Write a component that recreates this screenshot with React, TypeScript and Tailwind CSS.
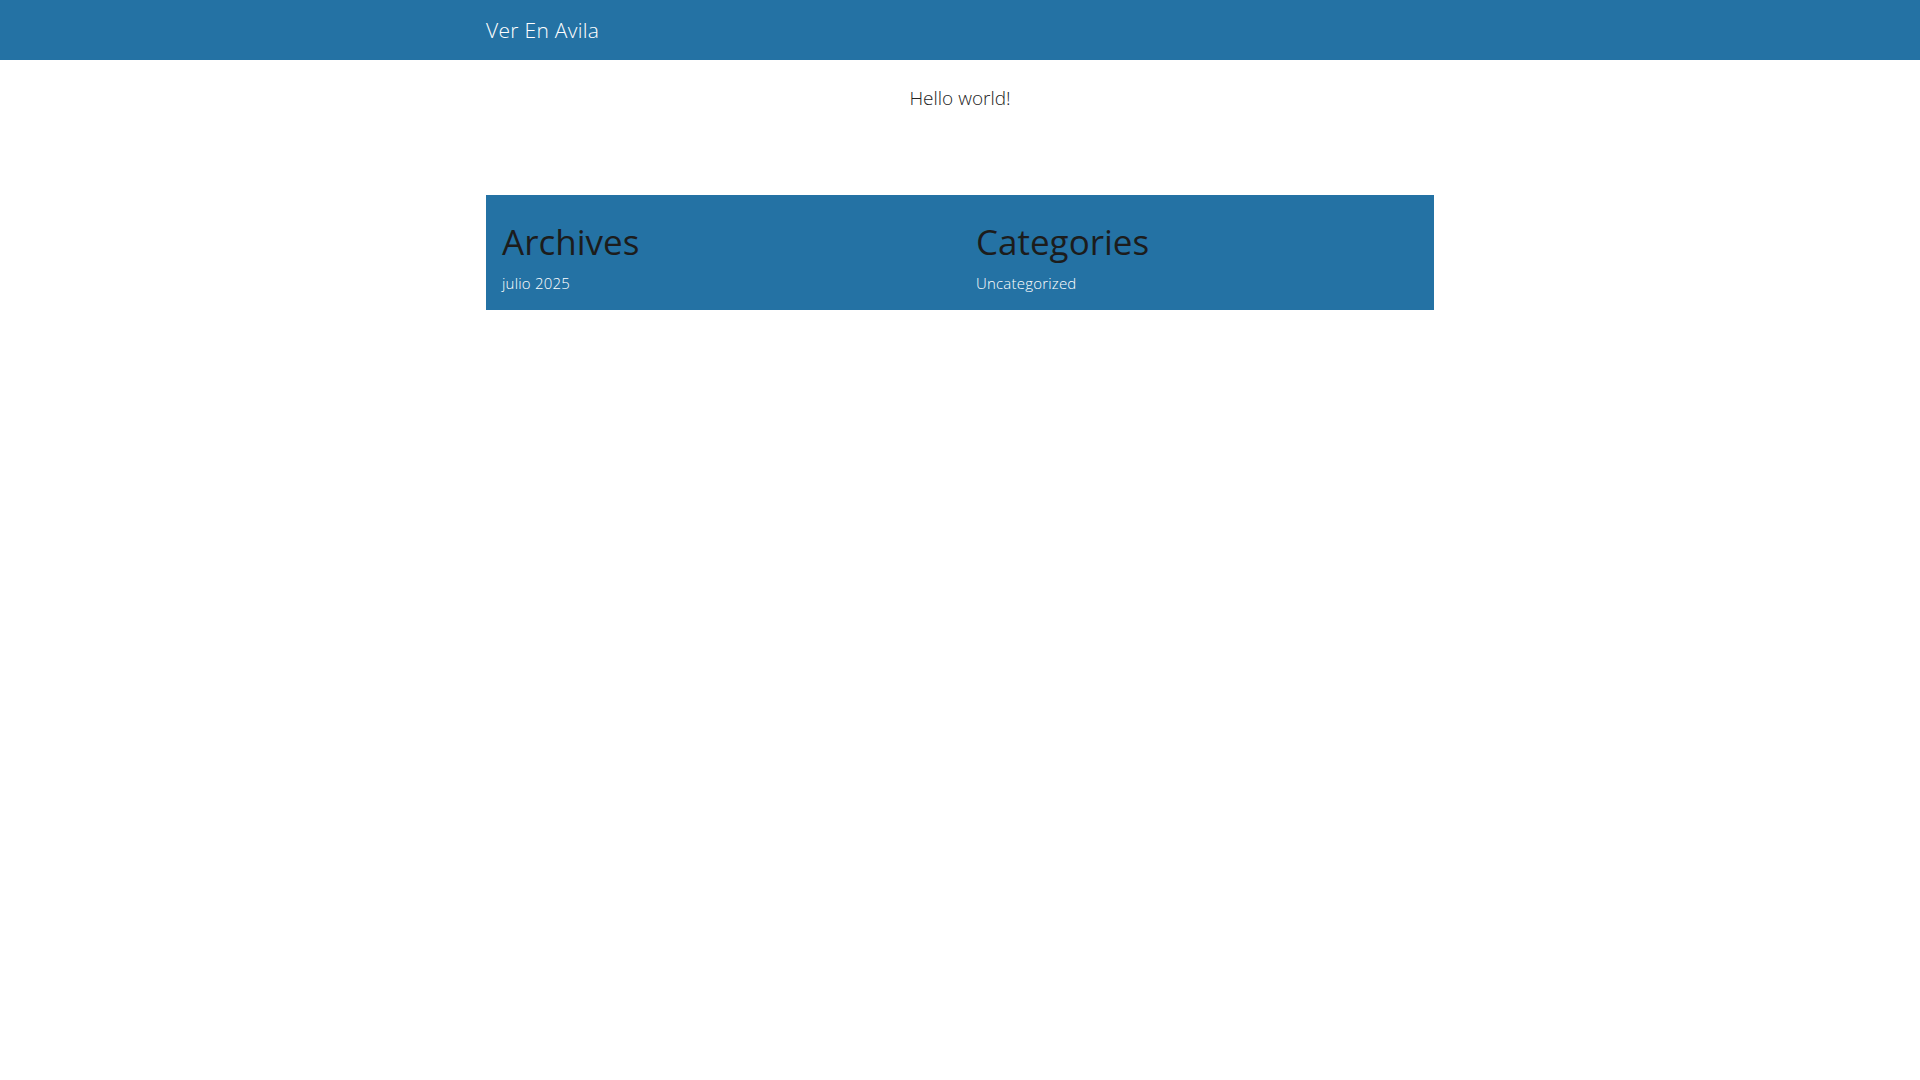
import React from "react";

export default function App() {
  const font = { fontFamily: '"Open Sans", "Noto Sans", sans-serif' };
  return (
    <div className="min-h-screen bg-white" style={font}>
      <header className="h-[60px] bg-[#2472a4]">
        <div className="mx-auto flex h-full w-[948px] items-center">
          <span className="text-[21px] font-light leading-none text-white tracking-[0.3px]">Ver En Avila</span>
        </div>
      </header>
      <main className="mx-auto w-[948px]">
        <div className="flex h-[135px] justify-center pt-[26px]">
          <h2 className="text-[19px] font-light leading-[24px] text-[#222]">Hello world!</h2>
        </div>
        <section className="grid h-[115px] grid-cols-2 bg-[#2472a4]">
          <div className="px-4 pt-[27px]">
            <h2 className="text-[35px] font-normal leading-[40px] text-[#1c1c1c]">Archives</h2>
            <ul className="mt-[11px]">
              <li className="text-[15px] font-light leading-[20px] text-white tracking-[0.2px]">julio 2025</li>
            </ul>
          </div>
          <div className="px-4 pt-[27px]">
            <h2 className="text-[35px] font-normal leading-[40px] text-[#1c1c1c]">Categories</h2>
            <ul className="mt-[11px]">
              <li className="text-[15px] font-light leading-[20px] text-white tracking-[0.2px]">Uncategorized</li>
            </ul>
          </div>
        </section>
      </main>
    </div>
  );
}
